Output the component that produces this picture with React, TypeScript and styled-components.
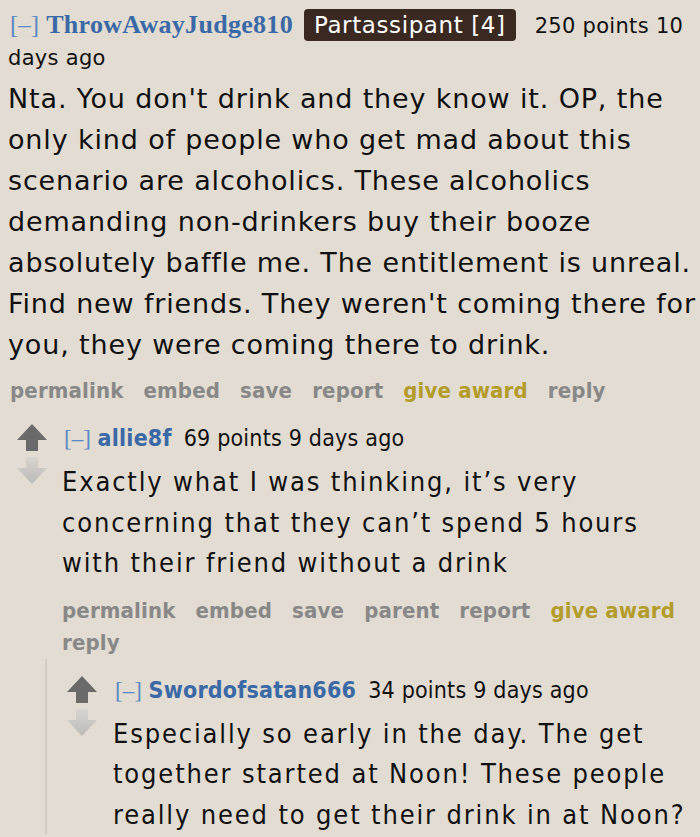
import React from "react";
import styled, { createGlobalStyle } from "styled-components";

const Colors = {
  page: "#e2dcd2",
  author: "#3b69a6",
  collapse: "#5a88c4",
  text: "#111111",
  action: "#888888",
  award: "#b39c2c",
  badge: "#3a2920",
  thread: "#d2ccc2",
};

const GlobalStyle = createGlobalStyle`
  html, body {
    margin: 0;
    padding: 0;
    background: ${Colors.page};
  }
  body {
    width: 700px;
    height: 837px;
    overflow: hidden;
  }
`;

interface CommentData {
  author: string;
  badge?: string;
  points: number;
  age: string;
  lines: string;
  actions: string[];
  replies?: CommentData[];
}

const thread: CommentData = {
  author: "ThrowAwayJudge810",
  badge: "Partassipant [4]",
  points: 250,
  age: "10 days ago",
  lines:
    "Nta. You don't drink and they know it. OP, the only kind of people who get mad about this scenario are alcoholics. These alcoholics demanding non-drinkers buy their booze absolutely baffle me. The entitlement is unreal. Find new friends. They weren't coming there for you, they were coming there to drink.",
  actions: ["permalink", "embed", "save", "report", "give award", "reply"],
  replies: [
    {
      author: "allie8f",
      points: 69,
      age: "9 days ago",
      lines:
        "Exactly what I was thinking, it\u2019s very concerning that they can\u2019t spend 5 hours with their friend without a drink",
      actions: ["permalink", "embed", "save", "parent", "report", "give award", "reply"],
      replies: [
        {
          author: "Swordofsatan666",
          points: 34,
          age: "9 days ago",
          lines:
            "Especially so early in the day. The get together started at Noon! These people really need to get their drink in at Noon?",
          actions: [],
        },
      ],
    },
  ],
};

const UpArrow = () => (
  <svg width="30" height="27" viewBox="0 0 30 27">
    <path d="M15 0 L30 16 L21 16 L21 27 L9 27 L9 16 L0 16 Z" fill="#6a6a6a" />
  </svg>
);

const DownArrow = () => (
  <svg width="30" height="27" viewBox="0 0 30 27">
    <defs>
      <linearGradient id="down" x1="0" y1="0" x2="0" y2="1">
        <stop offset="0" stopColor="#d8d5d1" />
        <stop offset="1" stopColor="#bcbab7" />
      </linearGradient>
    </defs>
    <path d="M9 0 L21 0 L21 11 L30 11 L15 27 L0 11 L9 11 Z" fill="url(#down)" />
  </svg>
);

// score words wrap one by one, as in the old reddit tagline
const Words: React.FC<{ text: string }> = ({ text }) => (
  <>
    {text.split(" ").map((w, i) => (
      <React.Fragment key={i}>
        {i > 0 && " "}
        <span>{w}</span>
      </React.Fragment>
    ))}
  </>
);

const TopComment: React.FC<{ comment: CommentData }> = ({ comment }) => (
  <TopEntry>
    <TopTagline>
      <Collapse>[–]</Collapse> <TopAuthor>{comment.author}</TopAuthor>
      {comment.badge && <Badge>{comment.badge}</Badge>}
      <Words text={`${comment.points} points ${comment.age}`} />
    </TopTagline>
    <TopBody>{comment.lines}</TopBody>
    <Actions $top>
      {comment.actions.map((a) => (
        <Action key={a} $award={a === "give award"}>
          {a}
        </Action>
      ))}
    </Actions>
    {comment.replies?.map((r) => (
      <Reply key={r.author} comment={r} depth={1} />
    ))}
  </TopEntry>
);

const Reply: React.FC<{ comment: CommentData; depth: number }> = ({ comment, depth }) => (
  <>
    <ReplyRow $depth={depth}>
      <Votes>
        <UpArrow />
        <DownArrow />
      </Votes>
      <Entry>
        <Tagline>
          <Collapse $small>[–]</Collapse> <Author>{comment.author}</Author>
          <span>
            {comment.points} points {comment.age}
          </span>
        </Tagline>
        <Body>{comment.lines}</Body>
        {comment.actions.length > 0 && (
          <Actions>
            {comment.actions.map((a) => (
              <Action key={a} $award={a === "give award"}>
                {a}
              </Action>
            ))}
          </Actions>
        )}
      </Entry>
    </ReplyRow>
    {comment.replies && comment.replies.length > 0 && (
      <Children>
        {comment.replies.map((r) => (
          <Reply key={r.author} comment={r} depth={depth + 1} />
        ))}
      </Children>
    )}
  </>
);

export default function App() {
  return (
    <>
      <GlobalStyle />
      <TopComment comment={thread} />
    </>
  );
}

const TopEntry = styled.div`
  padding-top: 9px;
`;

const TopTagline = styled.div`
  padding-left: 8px;
  line-height: 32px;
  font-family: "DejaVu Sans", Verdana, sans-serif;
  font-size: 21px;
  letter-spacing: 0.3px;
  color: ${Colors.text};
`;

const Collapse = styled.span<{ $small?: boolean }>`
  font-family: "Liberation Serif", serif;
  font-size: ${(p) => (p.$small ? "23px" : "25px")};
  letter-spacing: 0;
  color: ${Colors.collapse};
  margin-left: 2px;
`;

const TopAuthor = styled.span`
  font-family: "Liberation Serif", serif;
  font-weight: bold;
  font-size: 26px;
  letter-spacing: 0.3px;
  color: ${Colors.author};
  margin-right: 11px;
`;

const Badge = styled.span`
  display: inline-block;
  vertical-align: top;
  background: ${Colors.badge};
  color: #ffffff;
  font-family: "DejaVu Sans", Verdana, sans-serif;
  font-size: 23px;
  letter-spacing: 0.6px;
  line-height: 32px;
  padding: 0 10px;
  border-radius: 4px;
  margin-right: 19px;
`;

const TopBody = styled.p`
  margin: 4px 0 0;
  padding-left: 8px;
  font-family: "DejaVu Sans", Verdana, sans-serif;
  font-size: 27px;
  letter-spacing: 0.85px;
  line-height: 41px;
  color: ${Colors.text};
`;

const Actions = styled.div<{ $top?: boolean }>`
  display: flex;
  flex-wrap: wrap;
  column-gap: 20px;
  margin-top: ${(p) => (p.$top ? "10px" : "11px")};
  padding-left: ${(p) => (p.$top ? "10px" : "0")};
  line-height: 32px;
`;

const Action = styled.span<{ $award?: boolean }>`
  font-family: "Liberation Sans Narrow", "DejaVu Sans Condensed", sans-serif;
  font-stretch: condensed;
  font-weight: bold;
  font-size: 22px;
  letter-spacing: 0.15px;
  color: ${(p) => (p.$award ? Colors.award : Colors.action)};
`;

const ReplyRow = styled.div<{ $depth: number }>`
  display: flex;
  align-items: flex-start;
  gap: ${(p) => (p.$depth > 1 ? "16px" : "15px")};
  padding-left: ${(p) => (p.$depth > 1 ? "20px" : "17px")};
  padding-top: 16px;
`;

const Votes = styled.div`
  display: flex;
  flex-direction: column;
  gap: 6px;
  padding-top: 1px;
  flex-shrink: 0;
`;

const Entry = styled.div`
  flex: 1;
  min-width: 0;
`;

const Tagline = styled.div`
  line-height: 30px;
  font-family: "Liberation Sans Narrow", "DejaVu Sans Condensed", sans-serif;
  font-stretch: condensed;
  font-size: 23px;
  letter-spacing: 0.2px;
  color: ${Colors.text};
`;

const Author = styled.span`
  font-weight: bold;
  color: ${Colors.author};
  margin-right: 12px;
`;

const Body = styled.p`
  margin: 8px 0 0;
  font-family: "DejaVu Sans Condensed", Tahoma, sans-serif;
  font-stretch: condensed;
  font-size: 27px;
  letter-spacing: 1.85px;
  line-height: 40.5px;
  color: ${Colors.text};
`;

const Children = styled.div`
  margin-left: 45px;
  border-left: 2px solid ${Colors.thread};
`;
